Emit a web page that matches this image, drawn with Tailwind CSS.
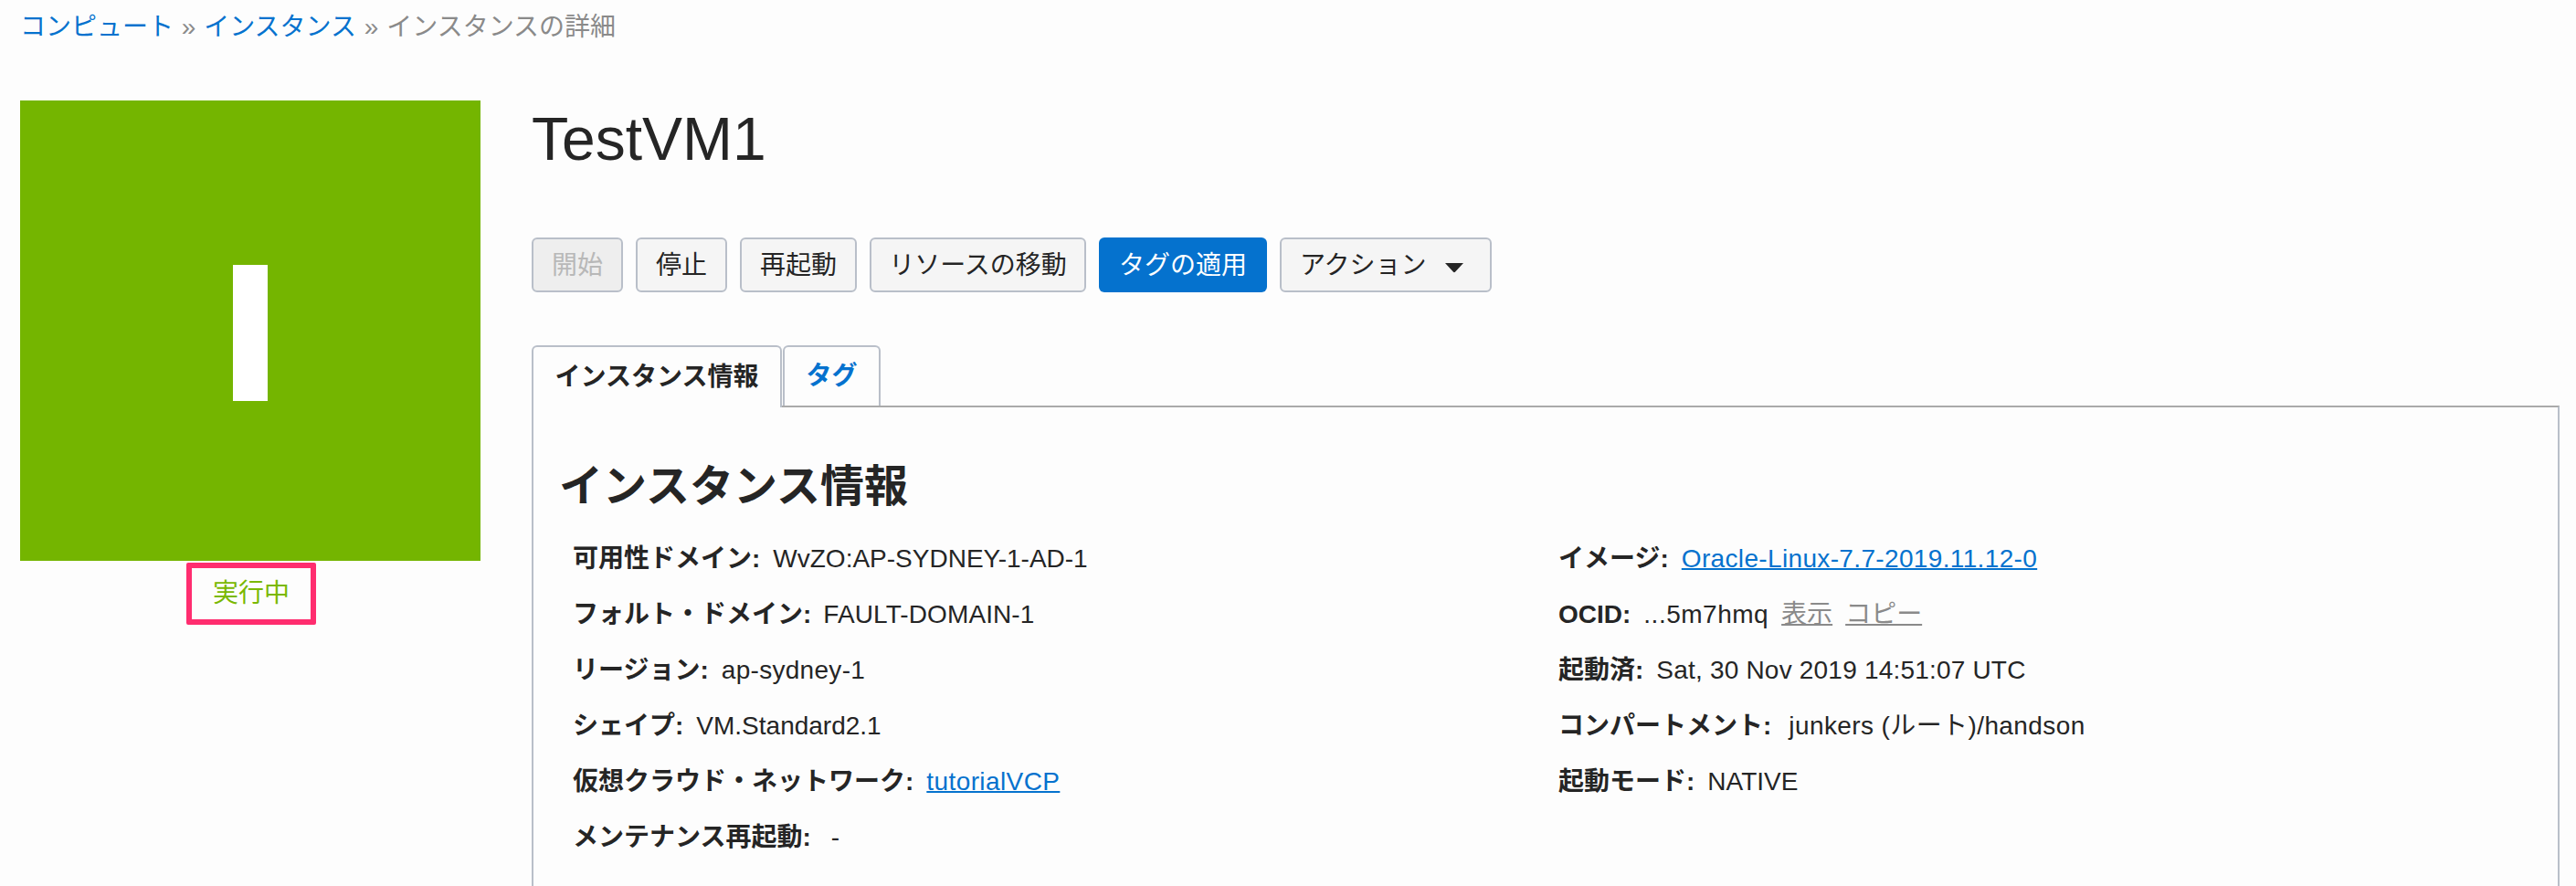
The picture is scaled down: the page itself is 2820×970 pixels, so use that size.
<!DOCTYPE html>
<html lang="ja">
  <head>
    <meta charset="UTF-8" />
    <title>インスタンスの詳細</title>
    <script src="https://cdn.jsdelivr.net/npm/@tailwindcss/browser@4"></script>
  </head>
  <body class="bg-[#fdfdfd] h-[970px] overflow-hidden font-['Liberation_Sans','Noto_Sans_CJK_JP',sans-serif] text-[#252525]">
    <!-- Breadcrumb -->
    <div class="h-[60px] pl-[22px] pt-[10px] text-[28px] leading-[40px] text-[#8a8a8a]">
      <a class="text-[#0572ce]">コンピュート</a><span class="px-[1px]"> » </span><a class="text-[#0572ce]">インスタンス</a><span class="px-[1px]"> » </span>インスタンスの詳細
    </div>

    <div class="flex pl-[22px] pr-[18px] pt-[50px] h-[910px]">
      <!-- Status tile -->
      <div class="w-[504px] shrink-0 flex flex-col items-center">
        <div class="w-[504px] h-[504px] pt-[4px] bg-[#74b500] flex items-center justify-center">
          <div class="w-[38px] h-[149px] bg-white"></div>
        </div>
        <div class="mt-[2px] ml-[2px] w-[142px] h-[68px] rounded-[2px] border-[6px] border-[#ff2d6f] flex items-center justify-center text-[28px] text-[#7ab800]">実行中</div>
      </div>

      <div class="ml-[56px] flex-1 min-w-0 flex flex-col">
        <h1 class="text-[66px] leading-[80px] mt-[2px]">TestVM1</h1>

        <!-- Buttons -->
        <div class="flex gap-[14px] mt-[68px] text-[28px]">
          <button class="h-[60px] w-[100px] pt-[2px] rounded-[6px] border-2 border-[#b9bfc9] bg-[#eeeeee] text-[#b8b8b8]">開始</button>
          <button class="h-[60px] w-[100px] pt-[2px] rounded-[6px] border-2 border-[#b9bfc9] bg-[#f5f5f5]">停止</button>
          <button class="h-[60px] w-[128px] pt-[2px] rounded-[6px] border-2 border-[#b9bfc9] bg-[#f5f5f5]">再起動</button>
          <button class="h-[60px] w-[237px] pt-[2px] rounded-[6px] border-2 border-[#b9bfc9] bg-[#f5f5f5]">リソースの移動</button>
          <button class="h-[60px] w-[184px] pt-[2px] rounded-[6px] bg-[#0572ce] text-white">タグの適用</button>
          <button class="h-[60px] w-[232px] pt-[2px] pl-[20px] rounded-[6px] border-2 border-[#b9bfc9] bg-[#f5f5f5] flex items-center gap-[20px]">
            アクション
            <svg class="mt-[4px]" width="20" height="11" viewBox="0 0 20 11"><path fill="#252525" d="M0 0H20L11.2 9.6a1.6 1.6 0 0 1-2.4 0Z" /></svg>
          </button>
        </div>

        <!-- Tabs -->
        <div class="flex items-start gap-[1px] h-[66px] mt-[58px] text-[28px] font-bold relative z-10">
          <div class="h-[68px] w-[274px] rounded-t-[6px] border-2 border-b-0 border-[#b9bfc9] bg-[#fdfdfd] flex items-center justify-center">インスタンス情報</div>
          <div class="h-[66px] w-[107px] rounded-t-[6px] border-2 border-b-0 border-[#b9bfc9] flex items-center justify-center text-[#0572ce]">タグ</div>
        </div>

        <!-- Panel -->
        <div class="flex-1 border-2 border-b-0 border-l-[#b9bfc9] border-r-[#b9bfc9] border-t-[#aaaaaa] pl-[28px] pt-[55px]">
          <h2 class="text-[48px] leading-[64px] font-bold">インスタンス情報</h2>
          <div class="grid grid-cols-[1079px_1fr] mt-[16px] pl-[15px] text-[28px]">
            <div class="flex flex-col">
              <div class="h-[61px] flex items-center gap-[14px]"><b>可用性ドメイン:</b><span>WvZO:AP-SYDNEY-1-AD-1</span></div>
              <div class="h-[61px] flex items-center gap-[13px]"><b>フォルト・ドメイン:</b><span class="tracking-[0.1px]">FAULT-DOMAIN-1</span></div>
              <div class="h-[61px] flex items-center gap-[14px]"><b>リージョン:</b><span class="tracking-[0.3px]">ap-sydney-1</span></div>
              <div class="h-[61px] flex items-center gap-[14px]"><b>シェイプ:</b><span>VM.Standard2.1</span></div>
              <div class="h-[61px] flex items-center gap-[14px]"><b>仮想クラウド・ネットワーク:</b><a class="underline decoration-2 tracking-[0.4px] text-[#0572ce]">tutorialVCP</a></div>
              <div class="h-[61px] flex items-center gap-[22px]"><b>メンテナンス再起動:</b><span>-</span></div>
            </div>
            <div class="flex flex-col">
              <div class="h-[61px] flex items-center gap-[14px]"><b>イメージ:</b><a class="underline decoration-2 tracking-[0.35px] text-[#0572ce]">Oracle-Linux-7.7-2019.11.12-0</a></div>
              <div class="h-[61px] flex items-center gap-[14px]"><b>OCID:</b><span class="tracking-[0.5px]">...5m7hmq</span><a class="underline decoration-2 text-[#8a8a8a]">表示</a><a class="underline decoration-2 text-[#8a8a8a]">コピー</a></div>
              <div class="h-[61px] flex items-center gap-[14px]"><b>起動済:</b><span class="tracking-[0.2px]">Sat, 30 Nov 2019 14:51:07 UTC</span></div>
              <div class="h-[61px] flex items-center gap-[19px]"><b>コンパートメント:</b><span class="tracking-[0.4px]">junkers (ルート)/handson</span></div>
              <div class="h-[61px] flex items-center gap-[14px]"><b>起動モード:</b><span>NATIVE</span></div>
            </div>
          </div>
        </div>
      </div>
    </div>
  </body>
</html>
